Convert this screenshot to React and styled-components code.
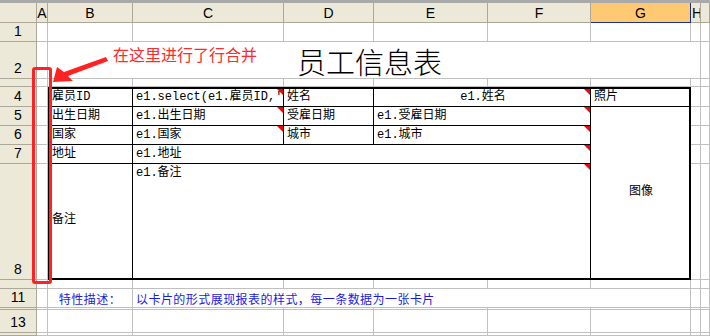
import React, { Fragment } from "react";
import styled, { createGlobalStyle } from "styled-components";

const GlobalStyle = createGlobalStyle`
  html, body {
    margin: 0;
    padding: 0;
    background: #ffffff;
    overflow: hidden;
  }
  body {
    font-family: "Liberation Sans", "Noto Sans CJK SC", sans-serif;
  }
`;

const COLS = "37px 11px 85px 151px 90px 114px 103px 100px 10px 9px";
const ROWS =
  "3px 20px 19px 37px 8px 20px 19px 19px 19px 116px 9px 19px 2px 23px 3px";

const Sheet = styled.div`
  position: relative;
  width: 710px;
  height: 336px;
  overflow: hidden;
  display: grid;
  grid-template-columns: ${COLS};
  grid-template-rows: ${ROWS};
`;

const Band = styled.div`
  grid-column: 1 / -1;
  background: #a9a9a9;
`;

const HeadBase = styled.div`
  box-sizing: border-box;
  background: #ece9d8;
  border-right: 1px solid #aca899;
  border-bottom: 1px solid #aca899;
  color: #000;
  font-size: 14px;
  line-height: 16px;
  overflow: hidden;
  white-space: nowrap;
  display: flex;
  justify-content: center;
`;

const Corner = styled(HeadBase)``;

const ColHead = styled(HeadBase)`
  align-items: center;
  background: ${(p) => (p.$active ? "#ffc873" : "#ece9d8")};
  border-right-color: ${(p) => (p.$active ? "#1c2f8c" : "#aca899")};
  border-bottom-color: ${(p) => (p.$active ? "#1c2f8c" : "#aca899")};
  justify-content: ${(p) => (p.$narrow ? "flex-start" : "center")};
  padding-left: ${(p) => (p.$narrow ? "1px" : "0")};
`;

const RowHead = styled(HeadBase)`
  align-items: ${(p) => (p.$tiny ? "flex-start" : "flex-end")};
  padding-bottom: ${(p) => (p.$tiny ? "0" : "2px")};
  line-height: ${(p) => (p.$tiny ? "8px" : "16px")};
`;

const Cell = styled.div`
  box-sizing: border-box;
  grid-column: span ${(p) => p.$span || 1};
  border-right: 1px solid #c0c0c0;
  border-bottom: 1px solid #c0c0c0;
  overflow: hidden;
  white-space: nowrap;
  display: flex;
`;

const TitleCell = styled(Cell)`
  border-right: none;
  overflow: visible;
  justify-content: center;
  align-items: flex-end;
  font-family: "Noto Sans CJK SC", sans-serif;
  font-weight: 300;
  font-size: 29px;
  line-height: 34px;
  color: #000;
`;

const DescCell = styled(Cell)`
  align-items: center;
  justify-content: ${(p) => (p.$center ? "center" : "flex-start")};
  padding: 1px 0 0 ${(p) => (p.$center ? "0" : "3px")};
  font-family: "Noto Sans CJK SC", sans-serif;
  font-size: 12px;
  letter-spacing: 0.45px;
  color: #1a1ae6;
`;

const Card = styled.div`
  grid-column: 3 / 9;
  grid-row: 6 / 11;
  margin-left: -1px;
  box-sizing: border-box;
  border: 2px solid #000;
  background: #fff;
  display: grid;
  grid-template-columns: 84px 151px 90px 114px 103px 98px;
  grid-template-rows: 18px 19px 19px 19px 114px;
  font-family: "Liberation Mono", "Noto Sans CJK SC", monospace;
  font-size: 12px;
  color: #000;
`;

const TCell = styled.div`
  position: relative;
  box-sizing: border-box;
  grid-column: ${(p) => p.$c} / span ${(p) => p.$span || 1};
  grid-row: ${(p) => p.$r} / span ${(p) => p.$rspan || 1};
  border-right: ${(p) => (p.$lastCol ? "none" : "1px solid #000")};
  border-bottom: ${(p) => (p.$lastRow ? "none" : "1px solid #000")};
  display: flex;
  justify-content: ${(p) => p.$align || "flex-start"};
  align-items: ${(p) => p.$valign || "flex-end"};
  padding: ${(p) => (p.$valign === "flex-start" ? "2px" : "0")} 1px 1px 3px;
  line-height: 15px;
  white-space: nowrap;
  overflow: hidden;

  &::after {
    content: "";
    display: ${(p) => (p.$mark ? "block" : "none")};
    position: absolute;
    top: 0;
    right: 0;
    width: 0;
    height: 0;
    border-top: 6px solid #ff0000;
    border-left: 6px solid transparent;
  }
`;

const CalloutBox = styled.div`
  position: absolute;
  left: 32px;
  top: 67px;
  width: 20px;
  height: 217px;
  box-sizing: border-box;
  border: 3px solid #ff2222;
  border-radius: 3px;
  pointer-events: none;
`;

const CalloutText = styled.div`
  position: absolute;
  left: 113px;
  top: 44px;
  font-family: "Noto Sans CJK SC", sans-serif;
  font-size: 16px;
  line-height: 20px;
  color: #ff2a2a;
  white-space: nowrap;
`;

const Arrow = styled.svg`
  position: absolute;
  left: 48px;
  top: 52px;
  width: 64px;
  height: 34px;
  overflow: visible;
`;

const letters = ["A", "B", "C", "D", "E", "F", "G", "H", ""];

const cardCells = [
  { c: 1, r: 1, t: "雇员ID" },
  { c: 2, r: 1, t: "e1.select(e1.雇员ID,'", mark: true },
  { c: 3, r: 1, t: "姓名" },
  { c: 4, r: 1, span: 2, t: "e1.姓名", align: "center", mark: true },
  { c: 6, r: 1, t: "照片", lastCol: true },
  { c: 1, r: 2, t: "出生日期" },
  { c: 2, r: 2, t: "e1.出生日期", mark: true },
  { c: 3, r: 2, t: "受雇日期" },
  { c: 4, r: 2, span: 2, t: "e1.受雇日期", mark: true },
  { c: 6, r: 2, rspan: 4, t: "图像", align: "center", valign: "center", lastCol: true, lastRow: true },
  { c: 1, r: 3, t: "国家" },
  { c: 2, r: 3, t: "e1.国家", mark: true },
  { c: 3, r: 3, t: "城市" },
  { c: 4, r: 3, span: 2, t: "e1.城市", mark: true },
  { c: 1, r: 4, t: "地址" },
  { c: 2, r: 4, span: 4, t: "e1.地址", mark: true },
  { c: 1, r: 5, t: "备注", valign: "center", lastRow: true },
  { c: 2, r: 5, span: 4, t: "e1.备注", valign: "flex-start", mark: true, lastRow: true },
];

function PlainRow({ label, tiny, cells }) {
  return (
    <Fragment>
      <RowHead $tiny={tiny}>{label}</RowHead>
      {cells || letters.map((l, i) => <Cell key={i} />)}
    </Fragment>
  );
}

export default function App() {
  return (
    <Fragment>
      <GlobalStyle />
      <Sheet>
        <Band />
        <Corner />
        {letters.map((l, i) => (
          <ColHead key={i} $active={l === "G"} $narrow={i >= 7}>
            {l}
          </ColHead>
        ))}

        <PlainRow label="1" />
        <PlainRow
          label="2"
          cells={[
            <Cell key="a" />,
            <TitleCell key="t" $span={6}>员工信息表</TitleCell>,
            <Cell key="g" />,
            <Cell key="h" />,
          ]}
        />
        <PlainRow label="" tiny />

        <Card>
          {cardCells.map((d, i) => (
            <TCell
              key={i}
              $c={d.c}
              $r={d.r}
              $span={d.span}
              $rspan={d.rspan}
              $align={d.align}
              $valign={d.valign}
              $mark={d.mark}
              $lastCol={d.lastCol}
              $lastRow={d.lastRow}
            >
              {d.t}
            </TCell>
          ))}
        </Card>
        {["4", "5", "6", "7", "8"].map((n) => (
          <PlainRow
            key={n}
            label={n}
            cells={[<Cell key="a" />, <Cell key="h" />, <Cell key="r" />]}
          />
        ))}

        <PlainRow label="" tiny />
        <PlainRow
          label="11"
          cells={[
            <Cell key="a" />,
            <DescCell key="b" $center>
              特性描述：
            </DescCell>,
            <DescCell key="c" $span={5}>
              以卡片的形式展现报表的样式，每一条数据为一张卡片
            </DescCell>,
            <Cell key="h" />,
            <Cell key="r" />,
          ]}
        />
        <PlainRow label="" tiny />
        <PlainRow label="13" />
        <PlainRow label="" tiny />

        <CalloutBox />
        <Arrow viewBox="48 52 64 34">
          <polygon
            points="53,82 57,67 64,72 106,57 108,61 68,76 73,81"
            fill="#ff2222"
          />
        </Arrow>
        <CalloutText>在这里进行了行合并</CalloutText>
      </Sheet>
    </Fragment>
  );
}
